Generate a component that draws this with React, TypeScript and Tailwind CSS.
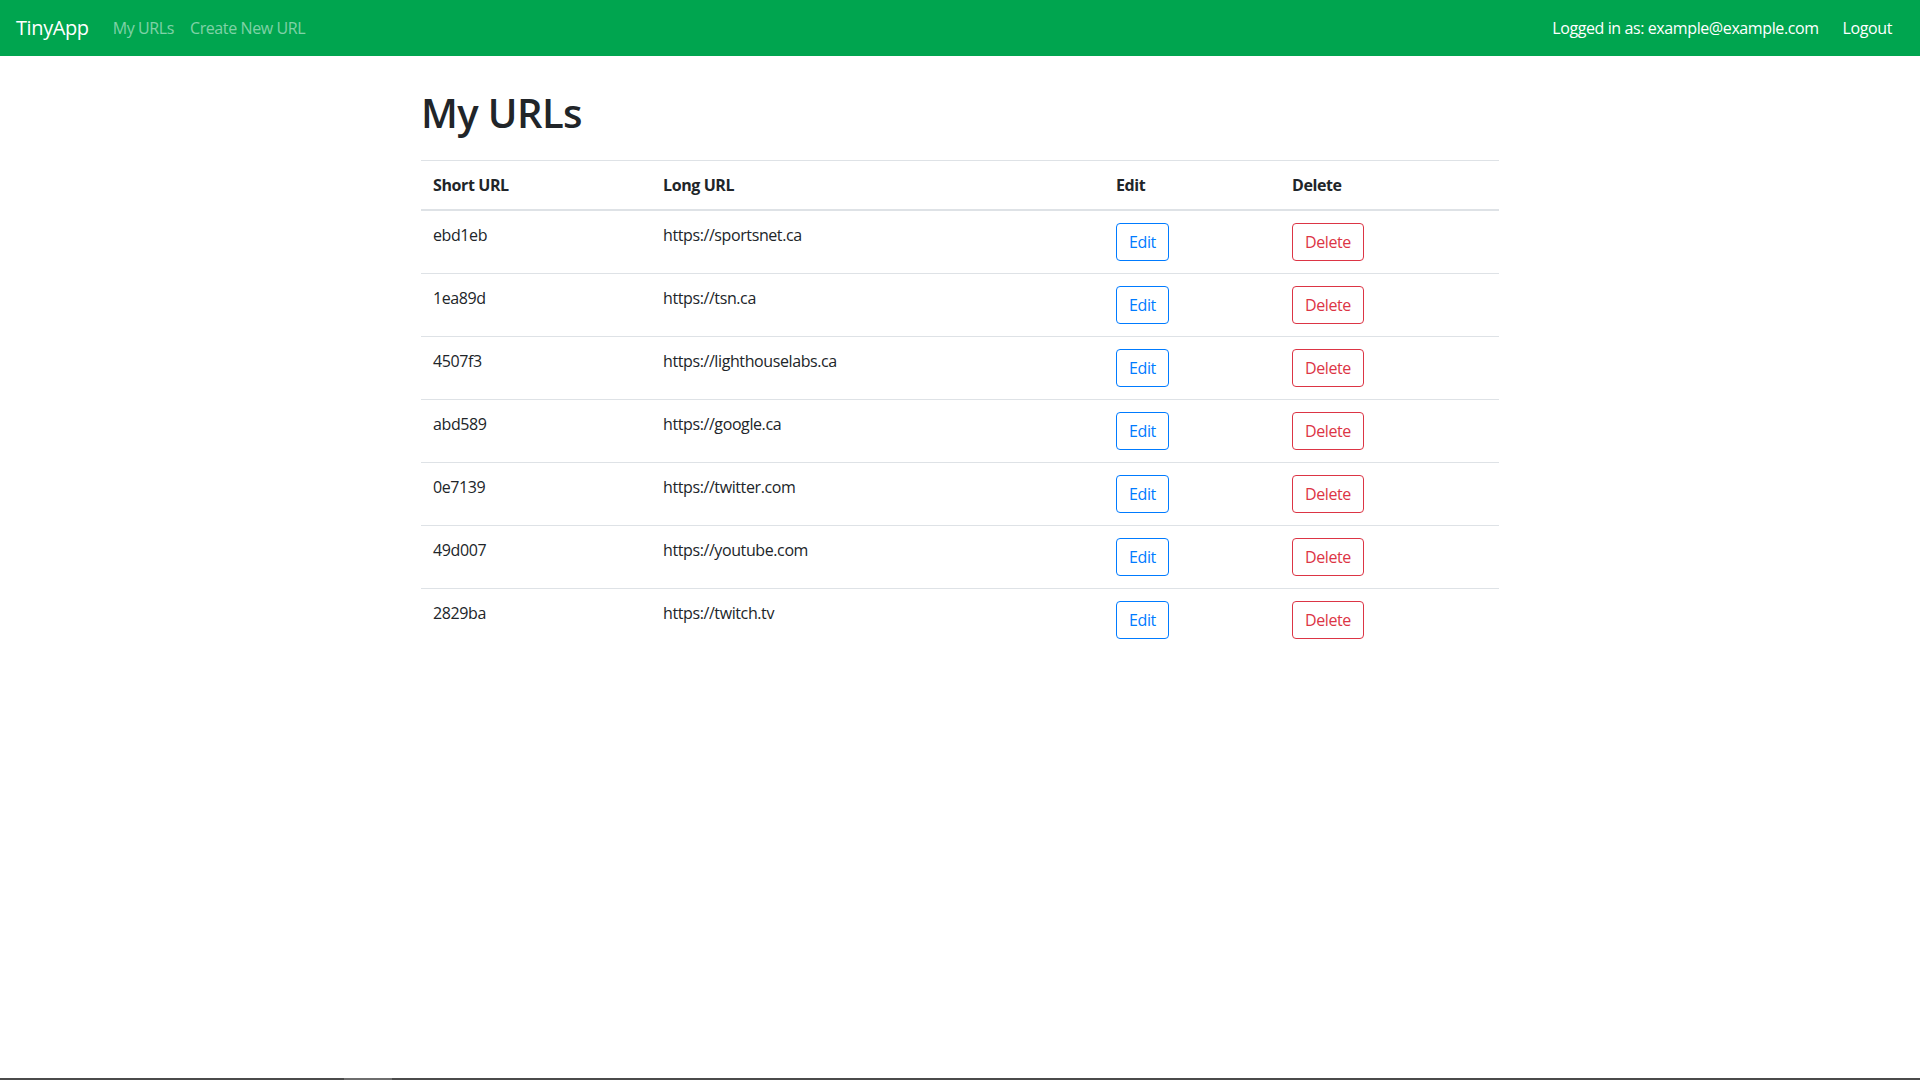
import React from 'react';

const urls = [
  { id: 'ebd1eb', long: 'https://sportsnet.ca' },
  { id: '1ea89d', long: 'https://tsn.ca' },
  { id: '4507f3', long: 'https://lighthouselabs.ca' },
  { id: 'abd589', long: 'https://google.ca' },
  { id: '0e7139', long: 'https://twitter.com' },
  { id: '49d007', long: 'https://youtube.com' },
  { id: '2829ba', long: 'https://twitch.tv' },
];

export default function App() {
  return (
    <div className="flex min-h-screen flex-col bg-white font-['Open_Sans',sans-serif] text-[16px] leading-6 tracking-[-0.4px] text-[#212529]">
      {/* Navbar */}
      <nav className="flex h-[56px] items-center bg-[#00a54f] pl-4 pr-[20px]">
        <span className="mr-4 text-[20px] leading-[30px] text-white">TinyApp</span>
        <a className="px-2 text-white/50">My URLs</a>
        <a className="px-2 text-white/50">Create New URL</a>
        <div className="ml-auto flex items-center">
          <span className="px-2 text-white">Logged in as: example@example.com</span>
          <a className="ml-2 px-2 text-white">Logout</a>
        </div>
      </nav>

      <main className="mx-auto w-[1078px] pt-[33px]">
        <h1 className="mb-[23px] text-[40px] leading-[48px] font-semibold tracking-[-0.6px]">My URLs</h1>
        <table className="w-full border-collapse">
          <thead>
            <tr>
              <th className="w-[230px] border-t border-b-2 border-[#dee2e6] p-3 text-left font-bold">Short URL</th>
              <th className="w-[453px] border-t border-b-2 border-[#dee2e6] p-3 text-left font-bold">Long URL</th>
              <th className="w-[176px] border-t border-b-2 border-[#dee2e6] p-3 text-left font-bold">Edit</th>
              <th className="border-t border-b-2 border-[#dee2e6] p-3 text-left font-bold">Delete</th>
            </tr>
          </thead>
          <tbody>
            {urls.map((u) => (
              <tr key={u.id}>
                <td className="border-t border-[#dee2e6] p-3 align-top">{u.id}</td>
                <td className="border-t border-[#dee2e6] p-3 align-top">{u.long}</td>
                <td className="border-t border-[#dee2e6] p-3 align-top">
                  <button className="h-[38px] rounded border border-[#007bff] px-3 text-[#007bff]">Edit</button>
                </td>
                <td className="border-t border-[#dee2e6] p-3 align-top">
                  <button className="h-[38px] rounded border border-[#dc3545] px-3 text-[#dc3545]">Delete</button>
                </td>
              </tr>
            ))}
          </tbody>
        </table>
      </main>

      {/* bottom scroll strip */}
      <div className="mt-auto flex h-[2px] bg-[#4b4b4b]">
        <div className="ml-[344px] w-[48px] bg-[#6e6e6e]" />
      </div>
    </div>
  );
}
